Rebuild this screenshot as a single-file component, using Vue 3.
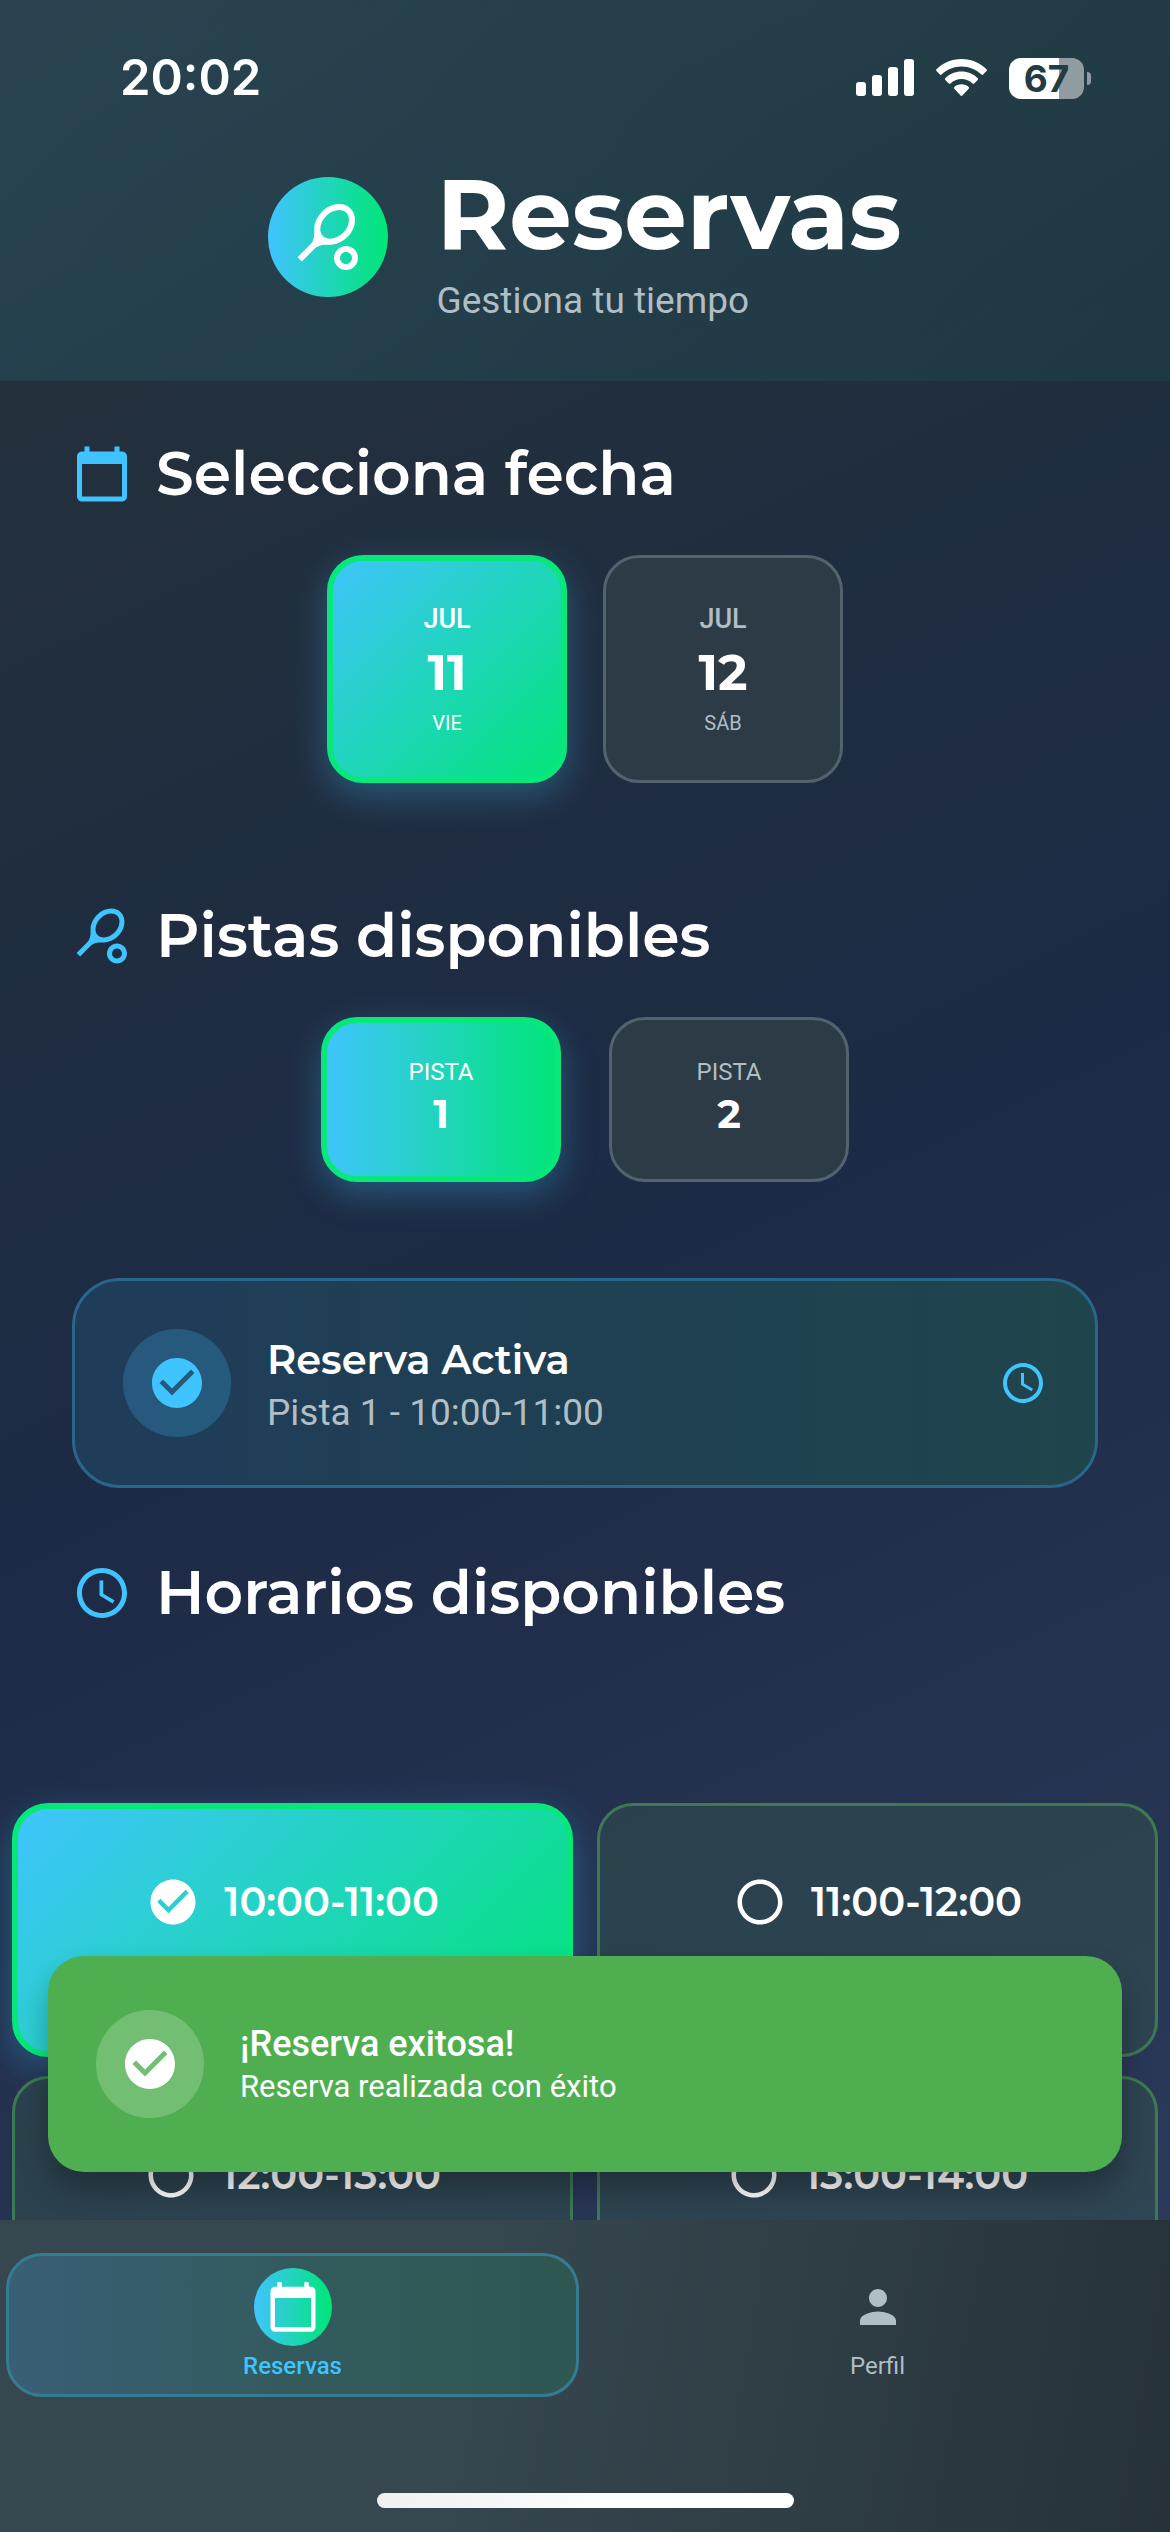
<script setup>
import { ref, h } from 'vue'

const paths = {
  calendar: 'M20 3h-1V1h-2v2H7V1H5v2H4c-1.1 0-2 .9-2 2v16c0 1.1.9 2 2 2h16c1.1 0 2-.9 2-2V5c0-1.1-.9-2-2-2zm0 18H4V8h16v13z',
  tennis: 'M19.52 2.49c-2.34-2.34-6.62-1.87-9.55 1.06-1.6 1.6-2.52 3.87-2.54 5.46-.02 1.58.26 3.89-1.35 5.5l-4.24 4.24 1.42 1.42 4.24-4.24c1.61-1.61 3.92-1.33 5.5-1.35s3.86-.94 5.46-2.54c2.92-2.93 3.4-7.21 1.06-9.55zm-9.2 9.19c-1.53-1.53-1.05-4.61 1.06-6.72s5.18-2.59 6.72-1.06c1.53 1.53 1.05 4.61-1.06 6.72s-5.18 2.59-6.72 1.06zM18 17c.53 0 1.04.21 1.41.59.78.78.78 2.05 0 2.83-.37.37-.88.58-1.41.58s-1.04-.21-1.41-.59c-.78-.78-.78-2.05 0-2.83.37-.37.88-.58 1.41-.58m0-2c-1.02 0-2.05.39-2.83 1.17-1.56 1.56-1.56 4.09 0 5.66.78.78 1.81 1.17 2.83 1.17s2.05-.39 2.83-1.17c1.56-1.56 1.56-4.09 0-5.66C20.05 15.39 19.02 15 18 15z',
  clock: 'M11.99 2C6.47 2 2 6.48 2 12s4.47 10 9.99 10C17.52 22 22 17.52 22 12S17.52 2 11.99 2zM12 20c-4.42 0-8-3.58-8-8s3.58-8 8-8 8 3.58 8 8-3.58 8-8 8zm.5-13H11v6l5.25 3.15.75-1.23-4.5-2.67z',
  check: 'M12 2C6.48 2 2 6.48 2 12s4.48 10 10 10 10-4.48 10-10S17.52 2 12 2zm-2 15l-5-5 1.41-1.41L10 14.17l7.59-7.59L19 8l-9 9z',
  circle: 'M12 2C6.48 2 2 6.48 2 12s4.48 10 10 10 10-4.48 10-10S17.52 2 12 2zm0 18c-4.42 0-8-3.58-8-8s3.58-8 8-8 8 3.58 8 8-3.58 8-8 8z',
  person: 'M12 12c2.21 0 4-1.79 4-4s-1.79-4-4-4-4 1.79-4 4 1.79 4 4 4zm0 2c-2.67 0-8 1.34-8 4v2h16v-2c0-2.66-5.33-4-8-4z'
}

const Icon = (props) =>
  h('svg', { viewBox: '0 0 24 24', width: props.size, height: props.size, fill: 'currentColor', 'aria-hidden': 'true' }, [
    h('path', { d: paths[props.name] })
  ])
Icon.props = ['name', 'size']

const dates = [
  { month: 'JUL', day: '11', weekday: 'VIE' },
  { month: 'JUL', day: '12', weekday: 'SÁB' }
]
const courts = ['1', '2']
const slots = [
  { time: '10:00-11:00' },
  { time: '11:00-12:00', status: 'Disponible' },
  { time: '12:00-13:00' },
  { time: '13:00-14:00' }
]
const date = ref(0)
const court = ref(0)
const slot = ref(0)
</script>

<template>
  <div class="app">
    <header class="header">
      <div class="status">
        <time class="clock">20:02</time>
        <div class="indicators">
          <svg width="58" height="38" viewBox="0 0 58 38" fill="#fff" aria-hidden="true">
            <rect x="0" y="23" width="10" height="14" rx="3" />
            <rect x="16" y="16" width="10" height="21" rx="3" />
            <rect x="32" y="8" width="10" height="29" rx="3" />
            <rect x="48" y="0" width="10" height="37" rx="3" />
          </svg>
          <svg width="51" height="38" viewBox="0 0 51 38" fill="#fff" aria-hidden="true">
            <path d="M25.500 0C15.700 0 6.800 3.900.500 10.200c-.6.600-.6 1.200 0 1.800l3.400 3.500c.5.500 1.200.5 1.700 0C10.700 10.400 17.700 7.400 25.500 7.400s14.800 3 19.900 8.100c.5.500 1.200.5 1.700 0l3.400-3.500c.6-.6.600-1.200 0-1.800C44.200 3.900 35.300 0 25.500 0z" />
            <path d="M25.500 12.600c-6.300 0-12 2.500-16.200 6.600-.5.500-.5 1.200 0 1.700l3.500 3.500c.5.500 1.200.5 1.700 0 2.900-2.700 6.700-4.300 11-4.300s8.100 1.600 11 4.300c.5.500 1.200.5 1.700 0l3.500-3.500c.5-.5.500-1.200 0-1.700-4.200-4.100-9.900-6.600-16.200-6.600z" />
            <path d="M25.500 25.300c-2.800 0-5.300 1-7.200 2.700-.6.500-.5 1.200 0 1.700l6.300 6.900c.5.600 1.300.6 1.800 0l6.300-6.900c.5-.5.600-1.200 0-1.700-1.900-1.700-4.400-2.700-7.200-2.700z" />
          </svg>
          <div class="battery"><span class="level">67</span></div>
        </div>
      </div>
      <div class="brand">
        <span class="logo"><Icon name="tennis" size="72" /></span>
        <div>
          <h1>Reservas</h1>
          <p class="tagline">Gestiona tu tiempo</p>
        </div>
      </div>
    </header>

    <main class="main">
      <section class="section">
        <h2><Icon name="calendar" size="60" />Selecciona fecha</h2>
        <div class="row dates">
          <button v-for="(d, i) in dates" :key="d.day" type="button" class="card date" :class="{ selected: date === i }" :aria-pressed="date === i" @click="date = i">
            <span class="month">{{ d.month }}</span>
            <span class="day">{{ d.day }}</span>
            <span class="weekday">{{ d.weekday }}</span>
          </button>
        </div>
      </section>

      <section class="section courts-section">
        <h2><Icon name="tennis" size="60" />Pistas disponibles</h2>
        <div class="row courts">
          <button v-for="(c, i) in courts" :key="c" type="button" class="card court" :class="{ selected: court === i }" :aria-pressed="court === i" @click="court = i">
            <span class="court-label">PISTA</span>
            <span class="court-number">{{ c }}</span>
          </button>
        </div>
      </section>

      <section class="booking">
        <span class="badge"><Icon name="check" size="60" /></span>
        <div class="booking-text">
          <h3>Reserva Activa</h3>
          <p>Pista 1 - 10:00-11:00</p>
        </div>
        <Icon name="clock" size="48" />
      </section>

      <section class="section hours-section">
        <h2><Icon name="clock" size="60" />Horarios disponibles</h2>
        <div class="slots">
          <button v-for="(s, i) in slots" :key="s.time" type="button" class="card slot" :class="{ selected: slot === i }" :aria-pressed="slot === i" @click="slot = i">
            <span class="slot-time"><Icon :name="slot === i ? 'check' : 'circle'" size="54" />{{ s.time }}</span>
            <span v-if="s.status" class="slot-status">{{ s.status }}</span>
          </button>
        </div>
      </section>

      <div class="toast" role="status">
        <span class="badge"><Icon name="check" size="60" /></span>
        <div>
          <strong>¡Reserva exitosa!</strong>
          <p>Reserva realizada con éxito</p>
        </div>
      </div>
    </main>

    <nav class="nav">
      <div class="tabs">
        <a href="#reservas" class="tab active" aria-current="page">
          <span class="tab-icon"><Icon name="calendar" size="54" /></span>Reservas
        </a>
        <a href="#perfil" class="tab">
          <span class="tab-icon"><Icon name="person" size="54" /></span>Perfil
        </a>
      </div>
      <div class="home-indicator"></div>
    </nav>
  </div>
</template>

<style>
body {
  margin: 0;
  background: #1c2a45;
}
</style>

<style scoped>
.app {
  height: 100vh;
  display: flex;
  flex-direction: column;
  overflow: hidden;
  background: linear-gradient(155deg, #263238 0%, #1c2a45 50%, #303e60 100%);
  color: #fff;
  font-family: Roboto, sans-serif;
}

h1, h2, h3, p {
  margin: 0;
}

svg {
  display: block;
  flex: none;
}

.header {
  flex: none;
  padding-bottom: 57px;
  background: linear-gradient(135deg, rgba(64, 196, 255, 0.12), rgba(0, 230, 118, 0.06));
}

.status {
  display: flex;
  align-items: center;
  justify-content: space-between;
  box-sizing: border-box;
  height: 150px;
  padding: 6px 79px 0 120px;
}

.clock {
  font: 600 49px/60px Inter, sans-serif;
}

.indicators {
  display: flex;
  align-items: center;
  gap: 22px;
}

.battery {
  position: relative;
  width: 75px;
  height: 41px;
  margin-right: 7px;
  border-radius: 12px;
  background: linear-gradient(90deg, #fff 67%, #909ca2 67%);
}

.battery::after {
  content: '';
  position: absolute;
  left: 78px;
  top: 14px;
  width: 4px;
  height: 13px;
  border-radius: 0 4px 4px 0;
  background: #909ca2;
}

.level {
  display: block;
  color: #223c46;
  font: 700 37px/41px Inter, sans-serif;
  text-align: center;
}

.brand {
  display: flex;
  align-items: center;
  justify-content: center;
  gap: 48px;
}

.logo {
  display: grid;
  place-items: center;
  width: 120px;
  height: 120px;
  border-radius: 50%;
  background: linear-gradient(90deg, #40c4ff, #00e676);
}

h1 {
  font: 700 99px/128px Montserrat, Inter, sans-serif;
}

.tagline {
  font-size: 37px;
  line-height: 46px;
  color: #b0bec5;
}

.main {
  position: relative;
  flex: 1;
  min-height: 0;
  overflow: hidden;
  padding-top: 57px;
}

h2 {
  display: flex;
  align-items: center;
  gap: 24px;
  padding: 0 72px;
  font: 600 60px/72px Montserrat, Inter, sans-serif;
}

h2 svg {
  color: #40c4ff;
}

.row {
  display: flex;
  justify-content: center;
  margin-top: 45px;
}

.dates {
  gap: 36px;
}

.courts {
  gap: 48px;
}

.courts-section {
  margin-top: 117px;
}

.card {
  display: flex;
  flex-direction: column;
  align-items: center;
  justify-content: center;
  box-sizing: border-box;
  padding: 0;
  border: 3px solid #53636e;
  border-radius: 36px;
  background: #2d3b47;
  color: #b0bec5;
  font-family: Roboto, sans-serif;
}

.card.selected {
  border: 6px solid #08e77a;
  background: linear-gradient(135deg, #40c4ff, #00e676) border-box;
  box-shadow: 0 12px 36px rgba(64, 196, 255, 0.3);
  color: #fff;
}

.date {
  width: 240px;
  height: 228px;
}

.month {
  font-size: 27px;
  line-height: 36px;
  font-weight: 500;
}

.day {
  padding: 8px 0;
  color: #fff;
  font: 700 50px/56px Montserrat, Inter, sans-serif;
}

.weekday {
  font-size: 20px;
  line-height: 28px;
}

.court {
  width: 240px;
  height: 165px;
  padding-bottom: 4px;
}

.card.court.selected {
  background: linear-gradient(90deg, #40c4ff, #00e676) border-box;
}

.court-label {
  font-size: 24px;
  line-height: 32px;
}

.court-number {
  color: #fff;
  font: 700 40px/52px Montserrat, Inter, sans-serif;
}

.booking {
  display: flex;
  align-items: center;
  gap: 36px;
  margin: 96px 72px 0;
  padding: 48px;
  border: 3px solid #29678a;
  border-radius: 48px;
  background: linear-gradient(90deg, #1f3c5a, #1f454c);
  color: #40c4ff;
}

.badge {
  display: grid;
  place-items: center;
  flex: none;
  width: 108px;
  height: 108px;
  border-radius: 50%;
  background: rgba(64, 196, 255, 0.22);
}

.booking-text {
  flex: 1;
}

h3 {
  color: #fff;
  font: 600 40px/60px Montserrat, Inter, sans-serif;
}

.booking-text p {
  color: #b0bec5;
  font-size: 37px;
  line-height: 46px;
}

.hours-section {
  margin-top: 69px;
}

.slots {
  display: grid;
  grid-template-columns: 1fr 1fr;
  gap: 19px 24px;
  margin-top: 174px;
  padding: 0 12px;
}

.slot {
  height: 254px;
  justify-content: flex-start;
  padding-top: 69px;
  border-color: #3d7a53;
  background: rgba(50, 82, 76, 0.5);
}

.slot.selected {
  padding-top: 66px;
}

.slot-time {
  display: flex;
  align-items: center;
  gap: 24px;
  color: #fff;
  font: 600 40px/54px Montserrat, Inter, sans-serif;
}

.slot-status {
  margin-top: 24px;
  font-size: 27px;
  line-height: 36px;
}

.toast {
  position: absolute;
  left: 48px;
  right: 48px;
  bottom: 48px;
  display: flex;
  align-items: center;
  gap: 36px;
  box-sizing: border-box;
  height: 216px;
  padding: 0 48px;
  border-radius: 36px;
  background: #4faf50;
  box-shadow: 0 18px 30px rgba(0, 0, 0, 0.28);
}

.toast .badge {
  background: rgba(255, 255, 255, 0.2);
}

.toast strong {
  display: block;
  font-size: 36px;
  line-height: 46px;
  font-weight: 500;
}

.toast p {
  font-size: 31px;
  line-height: 40px;
}

.nav {
  flex: none;
  background: linear-gradient(100deg, #37474f 40%, #263238);
}

.tabs {
  display: flex;
  gap: 12px;
  padding: 33px 6px 96px;
}

.tab {
  flex: 1;
  display: flex;
  flex-direction: column;
  align-items: center;
  gap: 4px;
  box-sizing: border-box;
  height: 144px;
  padding-top: 12px;
  border: 3px solid transparent;
  border-radius: 36px;
  color: #b0bec5;
  font-size: 24px;
  line-height: 32px;
  text-decoration: none;
}

.tab.active {
  border-color: #357b92;
  background: linear-gradient(90deg, #385f75, #335b5e 50%, #2f5751);
  color: #40c4ff;
  font-weight: 500;
}

.tab-icon {
  display: grid;
  place-items: center;
  width: 78px;
  height: 78px;
  border-radius: 50%;
}

.active .tab-icon {
  background: linear-gradient(90deg, #40c4ff, #00e676);
  color: #fff;
}

.home-indicator {
  width: 417px;
  height: 15px;
  margin: 0 auto 24px;
  border-radius: 8px;
  background: linear-gradient(90deg, #f0f0f0, #fff 60%);
}
</style>
